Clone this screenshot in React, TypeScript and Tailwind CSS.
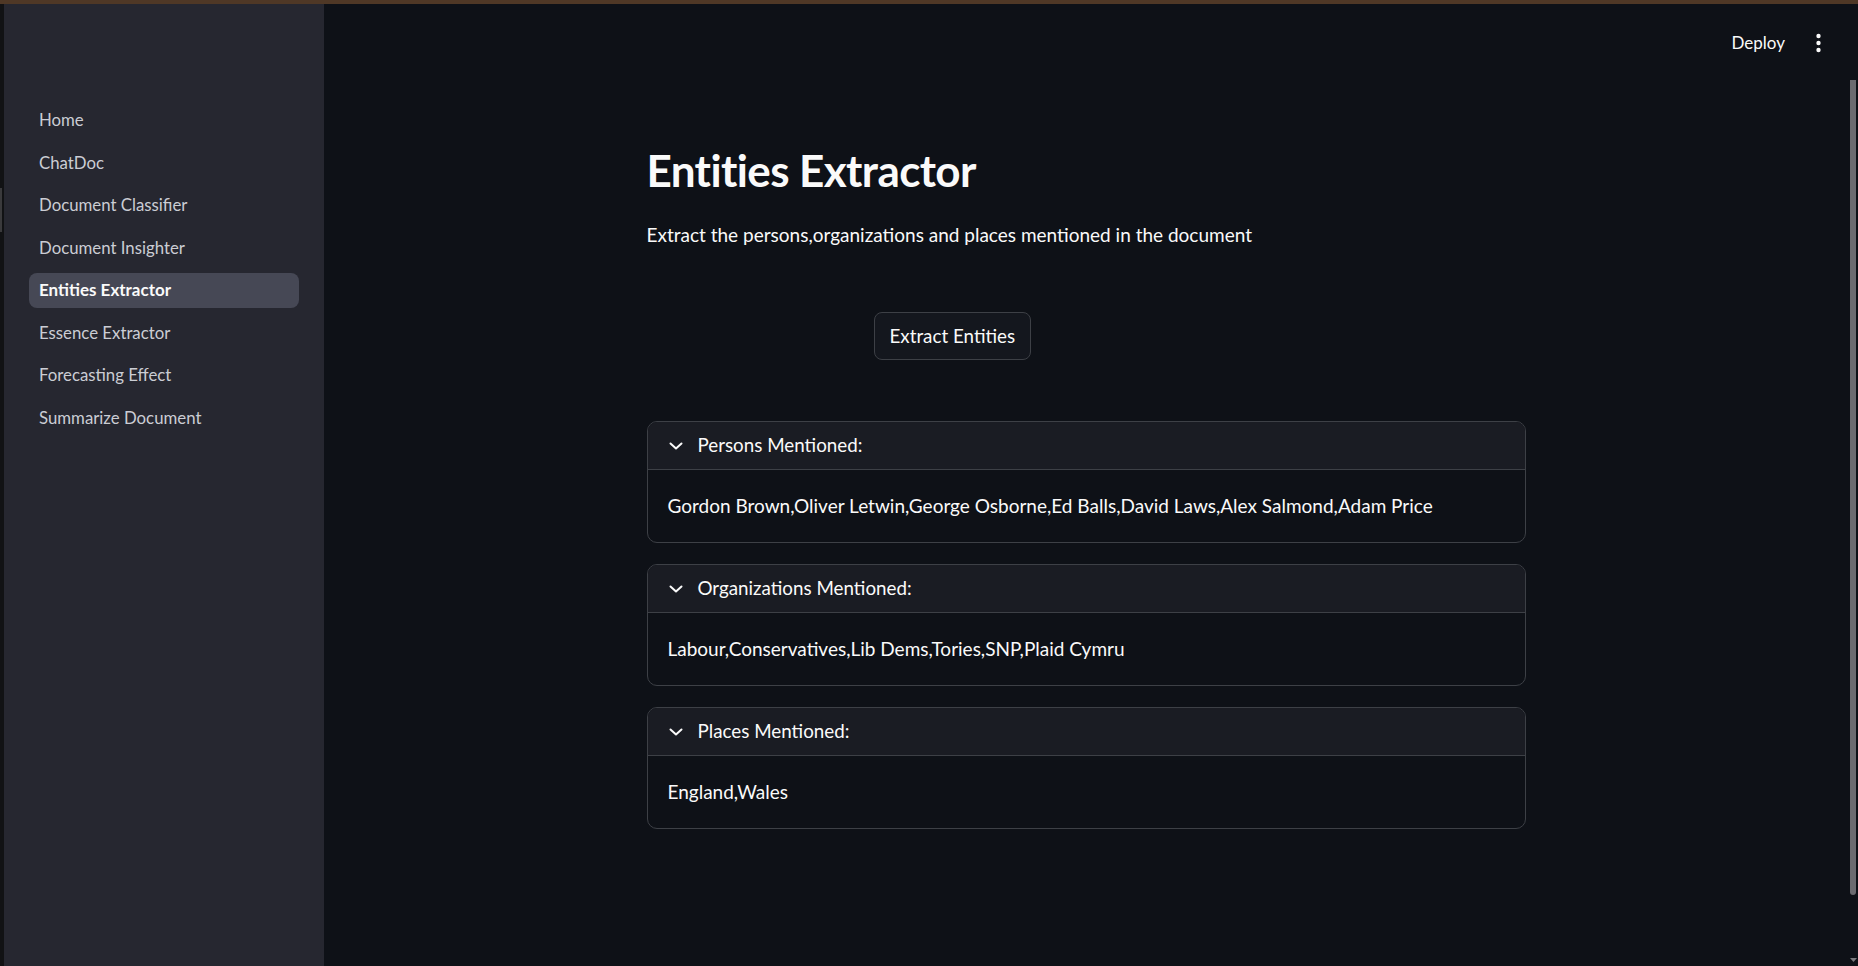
import React from "react";

const navItems = [
  "Home",
  "ChatDoc",
  "Document Classifier",
  "Document Insighter",
  "Entities Extractor",
  "Essence Extractor",
  "Forecasting Effect",
  "Summarize Document",
];

const sections = [
  {
    title: "Persons Mentioned:",
    body: "Gordon Brown,Oliver Letwin,George Osborne,Ed Balls,David Laws,Alex Salmond,Adam Price",
  },
  {
    title: "Organizations Mentioned:",
    body: "Labour,Conservatives,Lib Dems,Tories,SNP,Plaid Cymru",
  },
  { title: "Places Mentioned:", body: "England,Wales" },
];

function Chevron() {
  return (
    <svg width="14" height="8" viewBox="0 0 14 8" fill="none">
      <polyline
        points="1.5,1.5 7,6.5 12.5,1.5"
        stroke="#fafafa"
        strokeWidth="2"
        strokeLinecap="round"
        strokeLinejoin="round"
      />
    </svg>
  );
}

function Expander({ title, body }: { title: string; body: string }) {
  return (
    <div className="flex flex-col rounded-[10px] border border-[#3d4046] overflow-hidden">
      <div className="h-[48px] flex items-center pl-[21px] gap-[15px] bg-[#1a1c23] border-b border-[#3d4046]">
        <Chevron />
        <span className="text-[18.8px] text-[#fafafa]">{title}</span>
      </div>
      <div className="h-[72px] flex items-center pl-[20px]">
        <span className="text-[19px] text-[#fafafa]">{body}</span>
      </div>
    </div>
  );
}

export default function App() {
  return (
    <div
      className="h-[966px] w-full flex flex-col bg-[#0e1117] overflow-hidden"
      style={{ fontFamily: "Lato, 'Noto Sans', sans-serif" }}
    >
      <div className="h-[4px] w-full bg-[#4f3826] shrink-0" />
      <div className="flex flex-1 min-h-0">
        {/* left window strip */}
        <div className="w-[4px] bg-[#111214] flex flex-col shrink-0">
          <div className="h-[184px]" />
          <div className="h-[44px] w-[2px] bg-[#3a3a3c]" />
        </div>
        {/* sidebar */}
        <aside className="w-[320px] shrink-0 bg-[#262730] pt-[98.5px] px-[25px] flex flex-col gap-[7.5px]">
          {navItems.map((item) => {
            const active = item === "Entities Extractor";
            return (
              <div
                key={item}
                className={
                  active
                    ? "h-[35px] flex items-center px-[10px] rounded-[8px] bg-[#464855] text-[17px] font-bold text-[#fafafa]"
                    : "h-[35px] flex items-center px-[10px] rounded-[8px] text-[16.8px] text-[#cbcdd4]"
                }
              >
                {item}
              </div>
            );
          })}
        </aside>
        {/* main */}
        <main className="flex-1 flex min-w-0">
          <div className="flex-1 flex flex-col min-w-0">
            <header className="h-[78px] shrink-0 flex items-center justify-end pr-[27px] gap-[31px]">
              <span className="text-[17px] text-[#fafafa]">Deploy</span>
              <svg width="5" height="20" viewBox="0 0 5 20">
                <circle cx="2.5" cy="3" r="2.2" fill="#fafafa" />
                <circle cx="2.5" cy="10" r="2.2" fill="#fafafa" />
                <circle cx="2.5" cy="17" r="2.2" fill="#fafafa" />
              </svg>
            </header>
            <div className="w-[879px] mx-auto flex flex-col">
              <h1 className="mt-[61.5px] text-[44px] leading-[52px] font-bold tracking-[-0.6px] text-[#fafafa]">
                Entities Extractor
              </h1>
              <p className="mt-[25px] text-[19px] leading-[27px] text-[#fafafa]">
                Extract the persons,organizations and places mentioned in the document
              </p>
              <div className="mt-[64.5px] pl-[227px]">
                <button className="h-[48px] px-[15px] rounded-[8px] border border-[#3d4046] bg-[#14171e] text-[18.8px] text-[#fafafa]">
                  Extract Entities
                </button>
              </div>
              <div className="mt-[61px] flex flex-col gap-[21px]">
                {sections.map((s) => (
                  <Expander key={s.title} title={s.title} body={s.body} />
                ))}
              </div>
            </div>
          </div>
          {/* scrollbar */}
          <div className="w-[10px] shrink-0 flex flex-col items-center">
            <div className="h-[76px]" />
            <div className="h-[815px] w-[6px] bg-[#6b6b70] rounded-b-[3px]" />
            <div className="flex-1" />
            <svg width="7" height="4" viewBox="0 0 7 4" className="mb-[4px]">
              <polygon points="0,0 7,0 3.5,4" fill="#7a7a7e" />
            </svg>
          </div>
        </main>
      </div>
    </div>
  );
}
